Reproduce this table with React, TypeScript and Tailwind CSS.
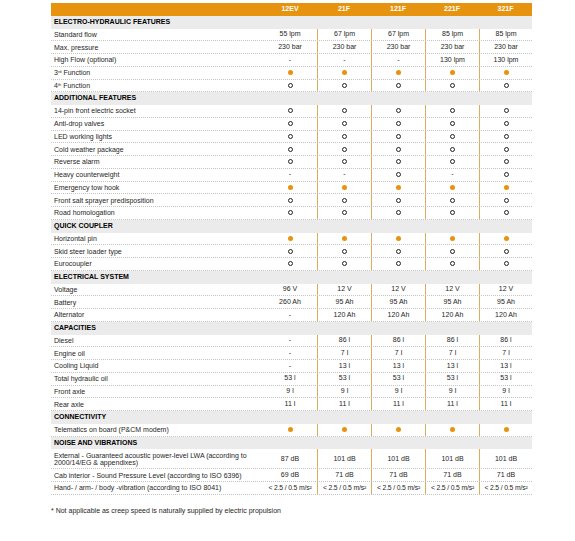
type Cell = string;

const models = ["12EV", "21F", "121F", "221F", "321F"];

type Row = { label: React.ReactNode; values: Cell[]; tall?: boolean };
type Section = { title: string; rows: Row[] };

const all = (v: Cell) => [v, v, v, v, v];

const sections: Section[] = [
  {
    title: "ELECTRO-HYDRAULIC FEATURES",
    rows: [
      { label: "Standard flow", values: ["55 lpm", "67 lpm", "67 lpm", "85 lpm", "85 lpm"] },
      { label: "Max. pressure", values: all("230 bar") },
      { label: "High Flow (optional)", values: ["-", "-", "-", "130 lpm", "130 lpm"] },
      { label: <>3<sup className="text-[4px] leading-none">rd</sup> Function</>, values: all("F") },
      { label: <>4<sup className="text-[4px] leading-none">th</sup> Function</>, values: all("O") },
    ],
  },
  {
    title: "ADDITIONAL FEATURES",
    rows: [
      { label: "14-pin front electric socket", values: all("O") },
      { label: "Anti-drop valves", values: all("O") },
      { label: "LED working lights", values: all("O") },
      { label: "Cold weather package", values: all("O") },
      { label: "Reverse alarm", values: all("O") },
      { label: "Heavy counterweight", values: ["-", "-", "O", "-", "O"] },
      { label: "Emergency tow hook", values: all("F") },
      { label: "Front salt sprayer predisposition", values: all("O") },
      { label: "Road homologation", values: all("O") },
    ],
  },
  {
    title: "QUICK COUPLER",
    rows: [
      { label: "Horizontal pin", values: all("F") },
      { label: "Skid steer loader type", values: all("O") },
      { label: "Eurocoupler", values: all("O") },
    ],
  },
  {
    title: "ELECTRICAL SYSTEM",
    rows: [
      { label: "Voltage", values: ["96 V", "12 V", "12 V", "12 V", "12 V"] },
      { label: "Battery", values: ["260 Ah", "95 Ah", "95 Ah", "95 Ah", "95 Ah"] },
      { label: "Alternator", values: ["-", "120 Ah", "120 Ah", "120 Ah", "120 Ah"] },
    ],
  },
  {
    title: "CAPACITIES",
    rows: [
      { label: "Diesel", values: ["-", "86 l", "86 l", "86 l", "86 l"] },
      { label: "Engine oil", values: ["-", "7 l", "7 l", "7 l", "7 l"] },
      { label: "Cooling Liquid", values: ["-", "13 l", "13 l", "13 l", "13 l"] },
      { label: "Total hydraulic oil", values: all("53 l") },
      { label: "Front axle", values: all("9 l") },
      { label: "Rear axle", values: all("11 l") },
    ],
  },
  {
    title: "CONNECTIVITY",
    rows: [{ label: "Telematics on board (P&CM modem)", values: all("F") }],
  },
  {
    title: "NOISE AND VIBRATIONS",
    rows: [
      {
        label: (
          <>
            External - Guaranteed acoustic power-level LWA (according to
            <br />
            2000/14/EG &amp; appendixes)
          </>
        ),
        values: ["87 dB", "101 dB", "101 dB", "101 dB", "101 dB"],
        tall: true,
      },
      {
        label: "Cab interior - Sound Pressure Level (according to ISO 6396)",
        values: ["69 dB", "71 dB", "71 dB", "71 dB", "71 dB"],
      },
      {
        label: "Hand- / arm- / body -vibration (according to ISO 8041)",
        values: all("< 2.5 / 0.5 m/s²"),
      },
    ],
  },
];

const colW = ["w-[54px]", "w-[54px]", "w-[54px]", "w-[54px]", "w-[53px]"];

function Value({ v }: { v: Cell }) {
  if (v === "F") return <span className="block w-[5px] h-[5px] rounded-full bg-[#e8920e]" />;
  if (v === "O") return <span className="block w-[5px] h-[5px] rounded-full border border-[#222]" />;
  if (v.startsWith("<"))
    return <span className="whitespace-nowrap text-[6.8px] tracking-[-0.15px]">{v}</span>;
  return <span className="whitespace-nowrap">{v}</span>;
}

export default function App() {
  return (
    <div className="min-h-[541px] bg-white pl-[51px] pt-[3px] text-[7px] text-[#1e1e1e] font-['Liberation_Sans',Arial,sans-serif]">
      <div className="w-[481px]">
        <div className="flex h-[12.75px] items-center bg-[#e6940f] font-bold text-white">
          <div className="w-[212px]" />
          {models.map((m, i) => (
            <div key={m} className={`${colW[i]} text-center`}>
              {m}
            </div>
          ))}
        </div>

        {sections.map((s) => (
          <div key={s.title}>
            <div className="flex h-[12.75px] items-center bg-[#ebebeb] pl-[3px] font-bold text-black">
              {s.title}
            </div>
            {s.rows.map((r, ri) => (
              <div
                key={ri}
                className={`flex ${r.tall ? "h-[20px]" : "h-[12.75px]"} border-b border-dotted border-[#c4c4c4]`}
              >
                <div className="w-[212px] flex items-center pl-[3px] leading-[7px]">
                  <span>{r.label}</span>
                </div>
                {r.values.map((v, i) => (
                  <div
                    key={i}
                    className={`${colW[i]} flex items-center justify-center ${i > 0 ? "border-l border-[#dcac5a]" : ""}`}
                  >
                    <Value v={v} />
                  </div>
                ))}
              </div>
            ))}
          </div>
        ))}

        <p className="mt-[11px] text-[7px]">
          * Not applicable as creep speed is naturally supplied by electric propulsion
        </p>
      </div>
    </div>
  );
}
